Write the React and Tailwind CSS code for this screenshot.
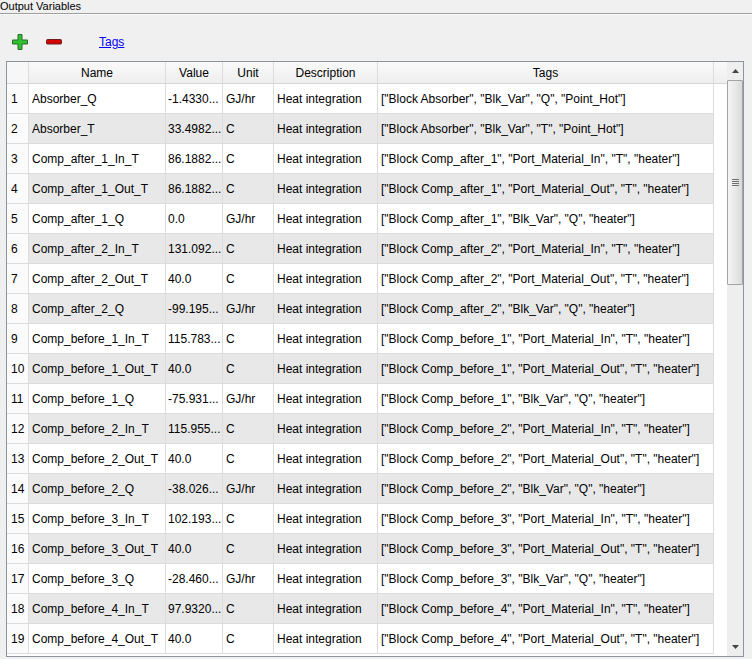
import React from "react";

const rows = [
  ["Absorber_Q", "-1.4330...", "GJ/hr", '["Block Absorber", "Blk_Var", "Q", "Point_Hot"]'],
  ["Absorber_T", "33.4982...", "C", '["Block Absorber", "Blk_Var", "T", "Point_Hot"]'],
  ["Comp_after_1_In_T", "86.1882...", "C", '["Block Comp_after_1", "Port_Material_In", "T", "heater"]'],
  ["Comp_after_1_Out_T", "86.1882...", "C", '["Block Comp_after_1", "Port_Material_Out", "T", "heater"]'],
  ["Comp_after_1_Q", "0.0", "GJ/hr", '["Block Comp_after_1", "Blk_Var", "Q", "heater"]'],
  ["Comp_after_2_In_T", "131.092...", "C", '["Block Comp_after_2", "Port_Material_In", "T", "heater"]'],
  ["Comp_after_2_Out_T", "40.0", "C", '["Block Comp_after_2", "Port_Material_Out", "T", "heater"]'],
  ["Comp_after_2_Q", "-99.195...", "GJ/hr", '["Block Comp_after_2", "Blk_Var", "Q", "heater"]'],
  ["Comp_before_1_In_T", "115.783...", "C", '["Block Comp_before_1", "Port_Material_In", "T", "heater"]'],
  ["Comp_before_1_Out_T", "40.0", "C", '["Block Comp_before_1", "Port_Material_Out", "T", "heater"]'],
  ["Comp_before_1_Q", "-75.931...", "GJ/hr", '["Block Comp_before_1", "Blk_Var", "Q", "heater"]'],
  ["Comp_before_2_In_T", "115.955...", "C", '["Block Comp_before_2", "Port_Material_In", "T", "heater"]'],
  ["Comp_before_2_Out_T", "40.0", "C", '["Block Comp_before_2", "Port_Material_Out", "T", "heater"]'],
  ["Comp_before_2_Q", "-38.026...", "GJ/hr", '["Block Comp_before_2", "Blk_Var", "Q", "heater"]'],
  ["Comp_before_3_In_T", "102.193...", "C", '["Block Comp_before_3", "Port_Material_In", "T", "heater"]'],
  ["Comp_before_3_Out_T", "40.0", "C", '["Block Comp_before_3", "Port_Material_Out", "T", "heater"]'],
  ["Comp_before_3_Q", "-28.460...", "GJ/hr", '["Block Comp_before_3", "Blk_Var", "Q", "heater"]'],
  ["Comp_before_4_In_T", "97.9320...", "C", '["Block Comp_before_4", "Port_Material_In", "T", "heater"]'],
  ["Comp_before_4_Out_T", "40.0", "C", '["Block Comp_before_4", "Port_Material_Out", "T", "heater"]'],
];

const PlusIcon = () => (
  <svg width="16" height="16" viewBox="0 0 16 16">
    <path d="M6 0.5h4v5.5h5.5v4h-5.5v5.5h-4v-5.5h-5.5v-4h5.5z" fill="#2fc22f" stroke="#2f6b2f" strokeWidth="1" />
  </svg>
);

const MinusIcon = () => (
  <svg width="16" height="6" viewBox="0 0 16 6">
    <rect x="0.5" y="0.5" width="15" height="4.5" rx="1" fill="#d40000" stroke="#6b1f1f" strokeWidth="1" />
  </svg>
);

const App = () => {
  return (
    <div className="w-[752px] h-[659px] bg-[#f0f0f0] overflow-hidden text-black font-['Liberation_Sans',Arial,sans-serif] text-[12px]">
      <div className="h-[14px] overflow-hidden border-b border-[#a0a0a0]">
        <div className="text-[11px] leading-[12px]">Output Variables</div>
      </div>
      <div className="h-[1px] bg-white/70" />
      <div className="h-[46px] flex items-center pl-[12px] pt-[8px]">
        <div className="w-[16px] h-[16px] flex items-center justify-center">
          <PlusIcon />
        </div>
        <div className="ml-[18px] w-[16px] flex items-center">
          <MinusIcon />
        </div>
        <span className="ml-[37px] text-[#0000ff] underline leading-[12px]">Tags</span>
      </div>
      <div className="ml-[6px] w-[738px] h-[596px] border border-[#8e949c] bg-white flex">
        <div className="w-[720px] flex flex-col">
          <div className="h-[22px] flex border-b border-[#d5d5d5] bg-gradient-to-b from-[#fafafa] to-[#eeeeee]">
            <div className="w-[22px] border-r border-[#dcdcdc] bg-[#f7f7f7]" />
            <div className="w-[137px] border-r border-[#dcdcdc] flex items-center justify-center">Name</div>
            <div className="w-[57px] border-r border-[#dcdcdc] flex items-center justify-center">Value</div>
            <div className="w-[51px] border-r border-[#dcdcdc] flex items-center justify-center">Unit</div>
            <div className="w-[104px] border-r border-[#dcdcdc] flex items-center justify-center">Description</div>
            <div className="w-[336px] border-r border-[#dcdcdc] flex items-center justify-center">Tags</div>
            <div className="flex-1" />
          </div>
          <div className="flex-1 overflow-hidden">
            {rows.map((r, i) => {
              const bg = i % 2 === 1 ? "bg-[#e8e8e8]" : "bg-white";
              return (
                <div key={i} className="h-[30px] flex">
                  <div className="w-[22px] border-r border-b border-[#dcdcdc] bg-[#fbfbfb] flex items-center pl-[4px] whitespace-nowrap">
                    {i + 1}
                  </div>
                  <div className={`w-[137px] ${bg} border-r border-b border-[#dcdcdc] flex items-center pl-[3px] whitespace-nowrap overflow-hidden`}>
                    {r[0]}
                  </div>
                  <div className={`w-[57px] ${bg} border-r border-b border-[#dcdcdc] flex items-center pl-[2px] whitespace-nowrap overflow-hidden`}>
                    {r[1]}
                  </div>
                  <div className={`w-[51px] ${bg} border-r border-b border-[#dcdcdc] flex items-center pl-[3px] whitespace-nowrap`}>
                    {r[2]}
                  </div>
                  <div className={`w-[104px] ${bg} border-r border-b border-[#dcdcdc] flex items-center pl-[3px] whitespace-nowrap`}>
                    Heat integration
                  </div>
                  <div className={`w-[336px] ${bg} border-r border-b border-[#dcdcdc] flex items-center pl-[3px] whitespace-nowrap overflow-hidden`}>
                    {r[3]}
                  </div>
                  <div className="flex-1 bg-white" />
                </div>
              );
            })}
          </div>
        </div>
        <div className="w-[16px] bg-[#eeeeee] flex flex-col">
          <div className="h-[18px] flex items-center justify-center">
            <svg width="7" height="4" viewBox="0 0 7 4">
              <path d="M0 4L3.5 0L7 4z" fill="#444" />
            </svg>
          </div>
          <div className="h-[205px] border border-[#a3a3a3] rounded-[1px] bg-gradient-to-r from-[#f4f4f4] via-[#e9e9e9] to-[#d9d9d9] flex items-center justify-center">
            <div className="flex flex-col gap-[1px] -mt-[1px]">
              <div className="w-[7px] h-[1px] bg-[#707070]" />
              <div className="w-[7px] h-[1px] bg-[#707070]" />
              <div className="w-[7px] h-[1px] bg-[#707070]" />
              <div className="w-[7px] h-[1px] bg-[#707070]" />
            </div>
          </div>
          <div className="flex-1" />
          <div className="h-[18px] flex items-center justify-center">
            <svg width="7" height="4" viewBox="0 0 7 4">
              <path d="M0 0L3.5 4L7 0z" fill="#444" />
            </svg>
          </div>
        </div>
      </div>
    </div>
  );
};

export default App;
